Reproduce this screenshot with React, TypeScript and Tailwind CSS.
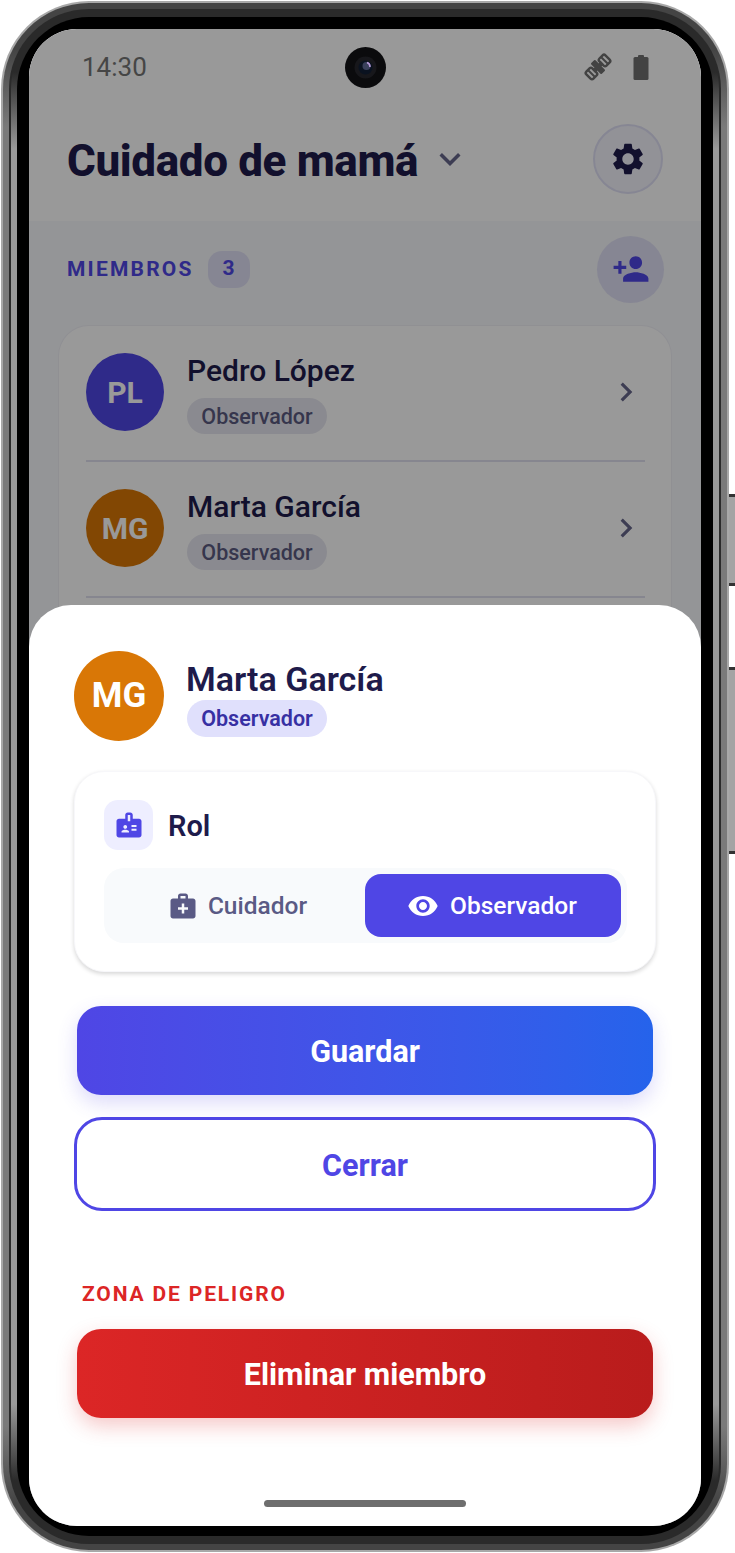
import { MdBadge, MdChevronRight, MdKeyboardArrowDown, MdMedicalServices, MdPersonAdd, MdSettings, MdVisibility } from 'react-icons/md';

const MemberRow = ({ initials, name, color }: { initials: string; name: string; color: string }) => (
  <div className="ml-[27px] mr-[26px] flex h-[136px] items-center border-b-2 border-[#e0e0ee] pb-[2px]">
    <div className={`flex h-[78px] w-[78px] items-center justify-center rounded-full text-[30px] font-bold text-white ${color}`}>{initials}</div>
    <div className="ml-[23px] flex-1 pt-[2px]">
      <p className="text-[30px] font-medium leading-[38px] text-[#1e1b4b]">{name}</p>
      <span className="mt-[8px] inline-flex h-[36px] w-[140px] items-center justify-center rounded-full bg-[#e7e7f0] pt-[2px] text-[21.5px] font-medium text-[#5a5a80]">Observador</span>
    </div>
    <MdChevronRight size={38} className="text-[#66668a]" />
  </div>
);

// status bar glyphs
const SatelliteIcon = () => (
  <svg width="30" height="30" viewBox="0 0 30 30" fill="currentColor">
    <g transform="rotate(-45 15 15)">
      <rect x="1.5" y="10" width="8.5" height="10" rx="2" fill="none" stroke="currentColor" strokeWidth="2.4" />
      <rect x="20" y="10" width="8.5" height="10" rx="2" fill="none" stroke="currentColor" strokeWidth="2.4" />
      <path d="M5.75 10v10M24.25 10v10" stroke="currentColor" strokeWidth="2" />
      <rect x="9" y="13" width="12" height="4" />
      <rect x="12" y="7.5" width="6" height="15" rx="1" />
    </g>
  </svg>
);

const BatteryIcon = () => (
  <svg width="16" height="25" viewBox="0 0 16 25" fill="currentColor">
    <rect x="5" y="0" width="6" height="3" rx="1" />
    <rect x="0.5" y="2" width="15" height="23" rx="1.5" />
  </svg>
);

const CameraLens = () => (
  <svg width="41" height="41" viewBox="0 0 41 41">
    <circle cx="20.5" cy="20.5" r="20.5" fill="#0b0b0d" />
    <circle cx="20.5" cy="20.5" r="11" fill="#17171b" />
    <circle cx="20.5" cy="20.5" r="7" fill="#0a1220" />
    <circle cx="21.5" cy="19" r="4" fill="#39405c" />
    <path d="M22 15.5a4.5 4.5 0 0 1 3 4.5" stroke="#b79ad8" strokeWidth="1.6" fill="none" />
  </svg>
);

export default function App() {
  return (
    <div className="relative h-[1553px] w-[735px] overflow-hidden bg-white font-['Roboto',sans-serif]">
      {/* side keys */}
      <div className="absolute right-0 top-[494px] h-[92px] w-[7px] border-y-[3px] border-[#333] bg-[#a4a4a4]" />
      <div className="absolute right-0 top-[667px] h-[187px] w-[7px] border-y-[3px] border-[#333] bg-[#a4a4a4]" />

      {/* handset frame */}
      <div className="relative ml-px mt-px h-[1551px] w-[728px] rounded-[88px] bg-[#a8a8a8] p-[2px]">
        <div className="h-full w-full rounded-[86px] bg-[linear-gradient(to_bottom,#444_0%,#444_3%,#7a7a7a_8%,#7a7a7a_92%,#444_97%,#444_100%)] p-[6px]">
          <div className="h-full w-full rounded-[80px] bg-[#2a2a2a] p-[2px]">
            <div className="h-full w-full rounded-[78px] bg-[linear-gradient(to_bottom,#2a2a2a_0%,#2a2a2a_4%,#999_9%,#999_91%,#2a2a2a_96%,#2a2a2a_100%)] p-[6px]">
              <div className="h-full w-full rounded-[72px] bg-black p-[12px] pb-[10px]">
                <div className="relative h-full w-full overflow-hidden rounded-[48px] bg-[#f7f8fc]">
                  <div className="h-[192px] bg-white">
                    <div className="flex h-[76px] items-center justify-between pl-[53px] pr-[52px]">
                      <span className="text-[26px] text-[#757575]">14:30</span>
                      <div className="flex items-center gap-[20px] text-[#707070]">
                        <SatelliteIcon />
                        <BatteryIcon />
                      </div>
                    </div>
                    <div className="mt-[19px] flex items-center justify-between pl-[38px] pr-[38px]">
                      <div className="flex items-center gap-[11px]">
                        <h1 className="pt-[3px] text-[44px] font-extrabold tracking-[-0.37px] text-[#1e1b4b]">Cuidado de mamá</h1>
                        <MdKeyboardArrowDown size={42} className="text-[#66668a]" />
                      </div>
                      <button type="button" className="flex h-[70px] w-[70px] items-center justify-center rounded-full border-2 border-[#e0e0f5] bg-[#f3f3fc] text-[#1e1b4b]">
                        <MdSettings size={38} />
                      </button>
                    </div>
                  </div>

                  <div className="flex h-[96px] items-center justify-between pl-[38px] pr-[37px]">
                    <div className="flex items-center gap-[14px]">
                      <span className="pt-[2px] text-[21px] font-bold tracking-[2.2px] text-[#4f46e5]">MIEMBROS</span>
                      <span className="flex h-[37px] w-[42px] items-center justify-center rounded-[14px] bg-[#e0e0f5] text-[21px] font-bold text-[#4f46e5]">3</span>
                    </div>
                    <button type="button" className="flex h-[67px] w-[67px] items-center justify-center rounded-full bg-[#e0e0f5] text-[#4f46e5]">
                      <MdPersonAdd size={38} />
                    </button>
                  </div>

                  <div className="mx-[30px] mt-[9px] rounded-t-[30px] bg-white pb-[200px] shadow-[0_0_0_1px_#f0f0f6]">
                    <MemberRow initials="PL" name="Pedro López" color="bg-[#4f46e5]" />
                    <MemberRow initials="MG" name="Marta García" color="bg-[#d97706]" />
                  </div>

                  {/* dim layer */}
                  <div className="absolute inset-0 bg-black/40" />

                  {/* member sheet */}
                  <div className="absolute inset-x-0 bottom-0 h-[921px] rounded-t-[42px] bg-white px-[45px] pt-[46px]">
                    <div className="flex items-center gap-[23px]">
                      <div className="flex h-[90px] w-[90px] items-center justify-center rounded-full bg-[#d97706] text-[35px] font-bold text-white">MG</div>
                      <div className="pt-[4px]">
                        <p className="-ml-px text-[34px] font-semibold leading-[40px] text-[#1e1b4b]">Marta García</p>
                        <span className="mt-[1px] flex h-[37px] w-[140px] items-center justify-center rounded-full bg-[#e0e0fc] pt-[2px] text-[21.5px] font-semibold text-[#3730a3]">Observador</span>
                      </div>
                    </div>

                    <div className="mt-[30px] h-[201px] rounded-[30px] border border-[#f7f7fa] bg-white px-[29px] pt-[28px] shadow-[0_2px_4px_rgba(0,0,0,0.16)]">
                      <div className="flex items-center gap-[15px]">
                        <div className="flex h-[50px] w-[49px] items-center justify-center rounded-[14px] bg-[#eeeeff] text-[#4f46e5]">
                          <MdBadge size={30} />
                        </div>
                        <span className="pt-[4px] text-[29px] font-semibold text-[#1e1b4b]">Rol</span>
                      </div>
                      <div className="mt-[18px] flex h-[75px] w-[523px] items-center rounded-[20px] bg-[#f8fafc] py-[6px] pr-[6px]">
                        <div className="flex h-full flex-1 items-center justify-center gap-[10px] pl-[6px] text-[24.5px] font-medium text-[#5a5a85]">
                          <MdMedicalServices size={30} />
                          <span className="pt-[2px]">Cuidador</span>
                        </div>
                        <div className="flex h-full w-[256px] items-center justify-center gap-[11px] rounded-[16px] bg-[#4f46e5] pr-[2px] text-[24.5px] font-medium text-white">
                          <MdVisibility size={32} />
                          <span className="pt-[2px]">Observador</span>
                        </div>
                      </div>
                    </div>

                    <button type="button" className="mx-[3px] mt-[34px] block h-[89px] w-[576px] rounded-[24px] bg-gradient-to-r from-[#4f46e5] to-[#2563eb] pt-[2px] text-[30.5px] font-bold text-white shadow-[0_8px_20px_rgba(79,70,229,0.2)]">
                      Guardar
                    </button>
                    <button type="button" className="mt-[22px] block h-[94px] w-[582px] rounded-[28px] border-[3px] border-[#4f46e5] bg-white pt-[3px] text-[30.5px] font-bold text-[#4f46e5]">
                      Cerrar
                    </button>

                    <p className="ml-[8px] mt-[70px] text-[21px] font-bold leading-[26px] tracking-[1.85px] text-[#dc2626]">ZONA DE PELIGRO</p>
                    <button type="button" className="mx-[3px] mt-[22px] block h-[89px] w-[576px] rounded-[24px] bg-gradient-to-r from-[#dc2626] to-[#b91c1c] pt-[3px] text-[30.5px] font-bold text-white shadow-[0_8px_20px_rgba(220,38,38,0.25)]">
                      Eliminar miembro
                    </button>

                    {/* gesture bar */}
                    <div className="absolute bottom-[19px] left-[235px] h-[7px] w-[202px] rounded-full bg-[#6e6e6e]" />
                  </div>

                  {/* front camera */}
                  <div className="absolute left-[316px] top-[18px]">
                    <CameraLens />
                  </div>
                </div>
              </div>
            </div>
          </div>
        </div>
      </div>
    </div>
  );
}
